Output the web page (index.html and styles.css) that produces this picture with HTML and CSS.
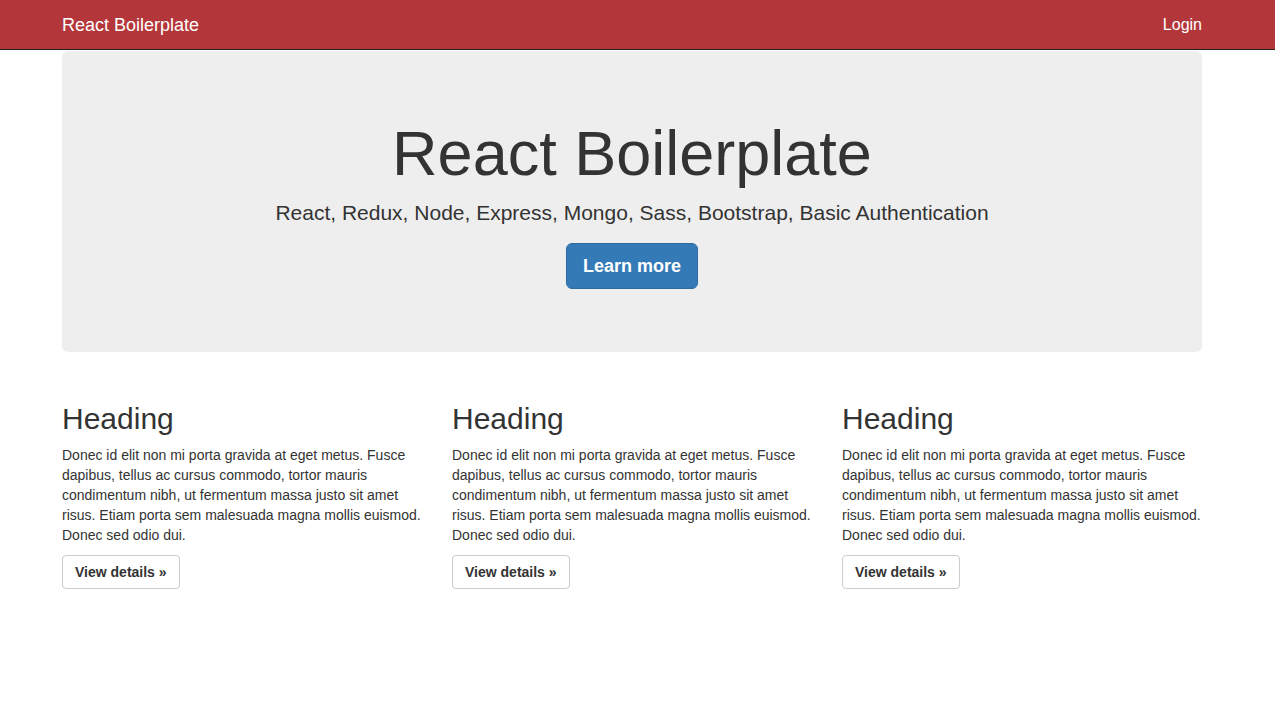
FILE: index.html
```html
<!DOCTYPE html>
<html lang="en">
<head>
<meta charset="utf-8">
<title>React Boilerplate</title>
<link rel="stylesheet" href="styles.css">
</head>
<body>
<nav class="navbar">
  <div class="container navbar-inner">
    <a class="brand" href="#">React Boilerplate</a>
    <a class="nav-link" href="#">Login</a>
  </div>
</nav>
<main class="page">
  <div class="container">
    <section class="jumbotron">
      <h1>React Boilerplate</h1>
      <p class="lead">React, Redux, Node, Express, Mongo, Sass, Bootstrap, Basic Authentication</p>
      <p class="actions"><a class="btn btn-primary" href="#">Learn more</a></p>
    </section>
    <div class="row">
      <div class="col">
        <h2>Heading</h2>
        <p>Donec id elit non mi porta gravida at eget metus. Fusce dapibus, tellus ac cursus commodo, tortor mauris condimentum nibh, ut fermentum massa justo sit amet risus. Etiam porta sem malesuada magna mollis euismod. Donec sed odio dui.</p>
        <p class="more"><a class="btn btn-default" href="#">View details »</a></p>
      </div>
      <div class="col">
        <h2>Heading</h2>
        <p>Donec id elit non mi porta gravida at eget metus. Fusce dapibus, tellus ac cursus commodo, tortor mauris condimentum nibh, ut fermentum massa justo sit amet risus. Etiam porta sem malesuada magna mollis euismod. Donec sed odio dui.</p>
        <p class="more"><a class="btn btn-default" href="#">View details »</a></p>
      </div>
      <div class="col">
        <h2>Heading</h2>
        <p>Donec id elit non mi porta gravida at eget metus. Fusce dapibus, tellus ac cursus commodo, tortor mauris condimentum nibh, ut fermentum massa justo sit amet risus. Etiam porta sem malesuada magna mollis euismod. Donec sed odio dui.</p>
        <p class="more"><a class="btn btn-default" href="#">View details »</a></p>
      </div>
    </div>
  </div>
</main>
</body>
</html>
```
FILE: styles.css
```css
* { box-sizing: border-box; }
html, body { margin: 0; padding: 0; }
body {
  font-family: "Liberation Sans", Arial, Helvetica, sans-serif;
  font-size: 14px;
  line-height: 1.428571;
  color: #333;
  background: #fff;
}
a { text-decoration: none; }
.page { padding-right: 11px; }
.container {
  width: 1170px;
  margin: 0 auto;
  padding: 0 15px;
}
.navbar {
  background: #b3373a;
  height: 50px;
  border-bottom: 1px solid #222;
  margin-bottom: 1px;
  padding-right: 11px;
}
.navbar-inner {
  display: flex;
  justify-content: space-between;
  align-items: center;
  height: 49px;
}
.brand {
  color: #fff;
  font-size: 18px;
  line-height: 20px;
}
.nav-link {
  color: #fff;
  font-size: 16px;
  line-height: 20px;
}
.jumbotron {
  background: #eee;
  border-radius: 6px;
  padding: 48px 60px;
  margin-bottom: 30px;
  text-align: center;
}
.jumbotron h1 {
  font-size: 63px;
  font-weight: 500;
  line-height: 1.1;
  margin: 20px 0 10px;
}
.jumbotron .lead {
  font-size: 21px;
  font-weight: 200;
  margin: 0 0 15px;
}
.jumbotron .actions { margin: 0 0 15px; }
.btn {
  display: inline-block;
  font-weight: 700;
  border: 1px solid transparent;
  text-align: center;
  vertical-align: middle;
}
.btn-primary {
  background: #337ab7;
  border-color: #2e6da4;
  color: #fff;
  font-size: 18px;
  line-height: 1.3333333;
  padding: 10px 16px;
  border-radius: 6px;
}
.row {
  display: grid;
  grid-template-columns: repeat(3, 360px);
  column-gap: 30px;
}
.col h2 {
  font-size: 30px;
  font-weight: 500;
  line-height: 1.1;
  margin: 20px 0 10px;
}
.col p { margin: 0 0 9px; padding-top: 1px; }
.col p.more { margin: 0 0 10px; padding-top: 0; }
.btn-default {
  color: #333;
  background: #fff;
  border-color: #ccc;
  font-size: 14px;
  line-height: 20px;
  padding: 6px 12px;
  border-radius: 4px;
}
```
